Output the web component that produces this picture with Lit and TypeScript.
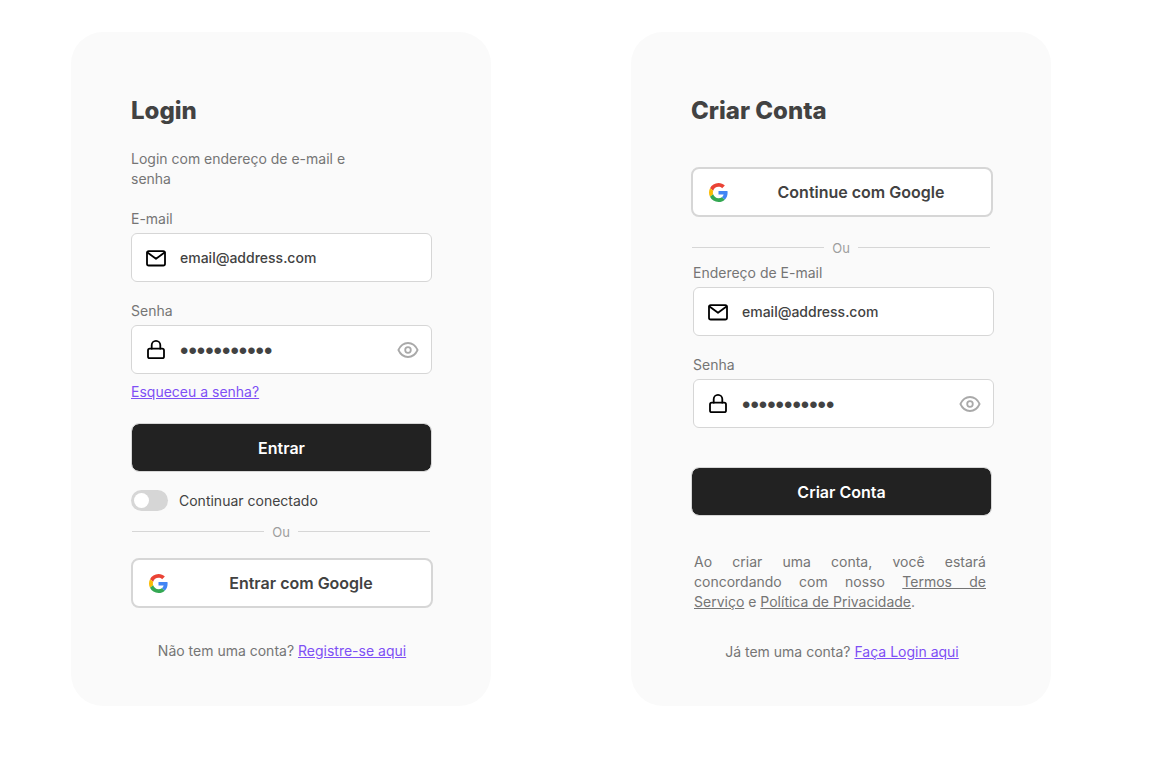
import { LitElement, html, css, svg } from "lit";
import { customElement, property, state } from "lit/decorators.js";

const mailIcon = svg`
  <svg width="24" height="24" viewBox="0 0 24 24" fill="none" stroke="#000" stroke-width="1.800" stroke-linecap="round" stroke-linejoin="round" aria-hidden="true">
    <rect x="3" y="5.100" width="18" height="14.400" rx="1.800" />
    <path d="M3.500 6.600L12 12.800l8.500-6.200" />
  </svg>`;

const lockIcon = svg`
  <svg width="24" height="24" viewBox="0 0 24 24" fill="none" stroke="#000" stroke-width="1.800" stroke-linecap="round" stroke-linejoin="round" aria-hidden="true">
    <rect x="4" y="10.700" width="16" height="9.500" rx="1.800" />
    <path d="M7.700 10.700V7.100a4.300 4.300 0 0 1 8.600 0v3.600" />
  </svg>`;

const eyeIcon = svg`
  <svg width="24" height="24" viewBox="0 0 24 24" fill="none" stroke="#a9a9a9" stroke-width="1.800" stroke-linecap="round" stroke-linejoin="round" aria-hidden="true">
    <path d="M2.400 12C4.500 7.500 8 5 12 5s7.500 2.500 9.600 7c-2.100 4.500-5.600 7-9.600 7s-7.500-2.500-9.600-7z" />
    <circle cx="12" cy="12" r="2.800" />
  </svg>`;

const googleIcon = svg`
  <svg width="19" height="19" viewBox="0 0 48 48" aria-hidden="true">
    <path fill="#EA4335" d="M24 9.500c3.540 0 6.710 1.220 9.210 3.600l6.850-6.850C35.900 2.380 30.470 0 24 0 14.620 0 6.510 5.380 2.560 13.220l7.980 6.190C12.430 13.720 17.740 9.500 24 9.500z" />
    <path fill="#4285F4" d="M46.980 24.550c0-1.570-.15-3.090-.38-4.550H24v9.020h12.940c-.58 2.960-2.260 5.480-4.780 7.180l7.730 6c4.510-4.180 7.090-10.360 7.090-17.650z" />
    <path fill="#FBBC05" d="M10.530 28.590c-.48-1.450-.76-2.990-.76-4.590s.27-3.140.76-4.590l-7.980-6.190C.92 16.460 0 20.120 0 24c0 3.880.92 7.540 2.560 10.780l7.970-6.190z" />
    <path fill="#34A853" d="M24 48c6.480 0 11.930-2.130 15.890-5.810l-7.730-6c-2.150 1.450-4.920 2.300-8.160 2.300-6.260 0-11.570-4.220-13.470-9.910l-7.980 6.190C6.510 42.620 14.620 48 24 48z" />
  </svg>`;

@customElement("text-field")
class TextField extends LitElement {
  @property() label = "";
  @property() value = "";
  @property({ type: Boolean }) secret = false;
  @state() private revealed = false;

  static styles = css`
    :host {
      display: block;
    }
    .label {
      display: block;
      margin-bottom: 4px;
      color: #757575;
    }
    .box {
      display: flex;
      align-items: center;
      box-sizing: border-box;
      height: 49px;
      padding: 0 11px 0 12px;
      border: 1px solid #d6d6d6;
      border-radius: 6px;
      background: #fff;
    }
    .box:focus-within {
      border-color: #7e4ff5;
    }
    .box svg {
      display: block;
      flex: none;
    }
    .input {
      flex: 1;
      min-width: 0;
      margin: 0 0 0 12px;
      padding: 0;
      border: 0;
      outline: 0;
      background: none;
      color: #424242;
      font: inherit;
      font-weight: 500;
    }
    .input[type="password"] {
      padding-top: 2px;
      font: 24px/28px "Liberation Sans", sans-serif;
    }
    .reveal {
      margin: 0;
      padding: 0;
      border: 0;
      background: none;
      cursor: pointer;
    }
  `;

  render() {
    return html`
      <label class="label" for="input">${this.label}</label>
      <div class="box">
        ${this.secret ? lockIcon : mailIcon}
        <input
          class="input"
          id="input"
          type=${this.secret && !this.revealed ? "password" : this.secret ? "text" : "email"}
          .value=${this.value}
        />
        ${this.secret
          ? html`<button
              class="reveal"
              type="button"
              aria-label="Mostrar senha"
              @click=${() => (this.revealed = !this.revealed)}
            >${eyeIcon}</button>`
          : null}
      </div>
    `;
  }
}

@customElement("app-root")
class AppRoot extends LitElement {
  static styles = css`
    :host {
      display: block;
      color: #757575;
      font: 14px/20px Inter, sans-serif;
    }
    .page {
      display: grid;
      grid-template-columns: repeat(2, minmax(0, 420px));
      gap: 140px;
      padding: 32px 71px;
    }
    .card {
      box-sizing: border-box;
      padding: 62px 58px 44px 60px;
      border-radius: 32px;
      background: #fafafa;
    }
    .title {
      margin: 0;
      color: #424242;
      font-size: 24px;
      line-height: 34px;
      font-weight: 800;
    }
    .intro {
      max-width: 240px;
      margin: 21px 0 20px;
    }
    .field {
      margin-bottom: 19px;
    }
    .login .field {
      margin-right: 1px;
    }
    .signup .field {
      margin-left: 2px;
      margin-right: -1px;
    }
    .login .last {
      margin-bottom: 8px;
    }
    .signup .last {
      margin-bottom: 39px;
    }
    .link {
      color: #7e4ff5;
    }
    .primary,
    .google {
      display: flex;
      align-items: center;
      box-sizing: border-box;
      width: 100%;
      margin: 0;
      border-radius: 8px;
      font: 600 16px/20px Inter, sans-serif;
      cursor: pointer;
    }
    .primary {
      justify-content: center;
      width: calc(100% - 1px);
      height: 49px;
      padding: 0;
      border: 1px solid #d6d6d6;
      background: #222;
      background-clip: padding-box;
      color: #fff;
    }
    .login .primary {
      margin-top: 21px;
    }
    .google {
      gap: 3px;
      height: 50px;
      padding: 0 0 0 16px;
      border: 2px solid #d6d6d6;
      background: #fff;
      color: #424242;
    }
    .google span {
      flex: 1;
      text-align: center;
    }
    .signup .google {
      margin-top: 39px;
    }
    .keep {
      display: flex;
      align-items: center;
      gap: 11px;
      margin: 18px 0 11px;
      color: #424242;
    }
    .switch {
      appearance: none;
      box-sizing: border-box;
      width: 37px;
      height: 21px;
      margin: 0;
      padding: 3px;
      border-radius: 11px;
      background: #d6d6d6;
      cursor: pointer;
    }
    .switch::before {
      content: "";
      display: block;
      width: 15px;
      height: 15px;
      border-radius: 50%;
      background: #fff;
    }
    .switch:checked {
      padding-left: 19px;
      background: #7e4ff5;
    }
    .divider {
      display: flex;
      align-items: center;
      gap: 8px;
      margin: 0 3px 16px 1px;
      color: #9e9e9e;
      font-size: 13px;
    }
    .divider::before,
    .divider::after {
      content: "";
      flex: 1;
      height: 1px;
      margin-bottom: 2px;
      background: #d6d6d6;
    }
    .signup .divider {
      margin-top: 21px;
      margin-bottom: 5px;
    }
    .terms {
      margin: 36px 7px 0 3px;
      text-align: justify;
    }
    .terms a {
      color: inherit;
    }
    .switcher {
      margin: 33px 0 0;
      text-align: center;
    }
    .signup .switcher {
      margin-top: 30px;
    }
    @media (max-width: 900px) {
      .page {
        grid-template-columns: minmax(0, 420px);
        justify-content: center;
        gap: 32px;
        padding: 32px 16px;
      }
    }
  `;

  private hold(event: Event) {
    event.preventDefault();
  }

  render() {
    return html`
      <main class="page">
        <form class="card login" @submit=${this.hold}>
          <h1 class="title">Login</h1>
          <p class="intro">Login com endereço de e-mail e senha</p>
          <text-field class="field" label="E-mail" value="email@address.com"></text-field>
          <text-field class="field last" label="Senha" value="minhasenha1" secret></text-field>
          <a class="link" href="#recuperar">Esqueceu a senha?</a>
          <button class="primary" type="submit">Entrar</button>
          <label class="keep"><input class="switch" type="checkbox" />Continuar conectado</label>
          <div class="divider">Ou</div>
          <button class="google" type="button">${googleIcon}<span>Entrar com Google</span></button>
          <p class="switcher">Não tem uma conta? <a class="link" href="#criar">Registre-se aqui</a></p>
        </form>

        <form class="card signup" @submit=${this.hold}>
          <h1 class="title">Criar Conta</h1>
          <button class="google" type="button">${googleIcon}<span>Continue com Google</span></button>
          <div class="divider">Ou</div>
          <text-field class="field" label="Endereço de E-mail" value="email@address.com"></text-field>
          <text-field class="field last" label="Senha" value="minhasenha1" secret></text-field>
          <button class="primary" type="submit">Criar Conta</button>
          <p class="terms">Ao criar uma conta, você estará concordando com nosso <a href="#termos">Termos de Serviço</a> e <a href="#privacidade">Política de Privacidade</a>.</p>
          <p class="switcher">Já tem uma conta? <a class="link" href="#login">Faça Login aqui</a></p>
        </form>
      </main>
    `;
  }
}
